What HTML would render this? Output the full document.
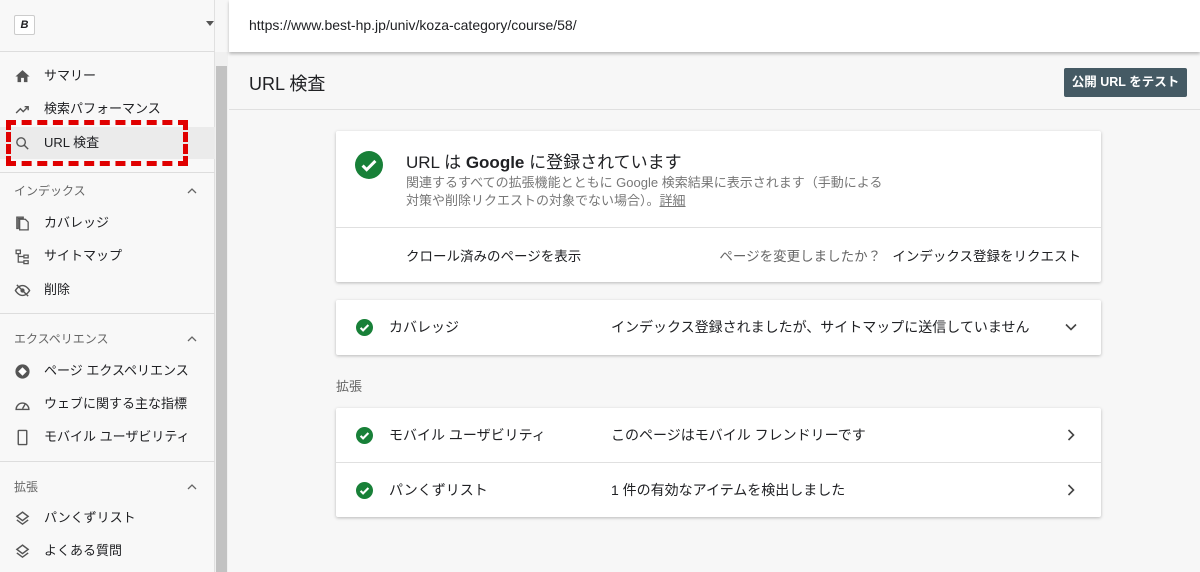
<!DOCTYPE html>
<html><head><meta charset="utf-8"><style>
*{box-sizing:border-box;margin:0;padding:0}
body{width:1200px;height:572px;overflow:hidden;font-family:"Liberation Sans","Noto Sans CJK JP",sans-serif;background:#f7f7f7;color:#202124;position:relative}
.sb{position:absolute;left:0;top:0;width:215px;height:572px;background:#f8f8f8;border-right:1px solid #e0e0e0}
.scroll{position:absolute;left:215px;top:52px;width:13px;height:520px;background:#f0f0f0}
.scroll div{position:absolute;left:1px;top:14px;width:11px;height:506px;background:#c2c2c2}
.top{position:absolute;left:229px;top:0;right:0;height:52px;background:#fff;box-shadow:0 2px 3px rgba(0,0,0,.25);font-size:14px;line-height:50px;padding-left:20px}
.sbh{position:absolute;left:0;top:0;width:215px;height:52px;border-bottom:1px solid #ddd}
.logo{position:absolute;left:14px;top:15px;width:21px;height:20px;border:1px solid #ccc;border-radius:2px;background:#fff;font:italic bold 11px "Liberation Sans";text-align:center;line-height:18px}
.it{position:absolute;left:0;width:215px;font-size:13px;height:32px;line-height:32px;padding-left:44px;color:#202124}
.ic{position:absolute;left:14px;top:8px;width:17px;height:17px}
.sec{position:absolute;left:14px;font-size:12px;color:#666}
.car{position:absolute;left:187px;width:10px;height:10px}
.dv{position:absolute;left:0;width:215px;border-top:1px solid #ddd}
.hdr{position:absolute;left:229px;top:52px;right:0;height:58px;border-bottom:1px solid #e0e0e0}
.hdr h1{position:absolute;left:20px;top:18px;font-size:18px;font-weight:normal}
.btn{position:absolute;left:1064px;top:68px;width:123px;height:29px;background:#455a64;color:#fff;font-size:12.5px;font-weight:bold;text-align:center;line-height:29px;border-radius:2px;white-space:nowrap}
.card{position:absolute;left:336px;width:765px;background:#fff;box-shadow:0 1px 3px rgba(0,0,0,.25);border-radius:2px}
.chk{position:absolute;width:17px;height:17px;border-radius:50%;background:#188038}
.row{position:absolute;left:0;width:765px;height:54px;font-size:14px;line-height:54px}
</style></head><body>
<div class="sb">
<div class="sbh"><div class="logo">B</div><div style="position:absolute;left:206px;top:21px;border:4px solid transparent;border-top:5px solid #555"></div></div>
<div class="it" style="top:60px"><svg class="ic" viewBox="0 0 24 24"><path d="M10 20v-6h4v6h5v-8h3L12 3 2 12h3v8z" fill="#555"/></svg>サマリー</div>
<div class="it" style="top:93px"><svg class="ic" viewBox="0 0 24 24"><path d="M3 17l6-6 4 4 7-7M15 8h5v5" stroke="#555" stroke-width="2" fill="none"/></svg>検索パフォーマンス</div>
<div class="it" style="top:127px;background:#ebebeb"><svg class="ic" viewBox="0 0 24 24"><circle cx="10" cy="10" r="6" stroke="#555" stroke-width="2" fill="none"/><path d="M14.5 14.5L20 20" stroke="#555" stroke-width="2"/></svg>URL 検査</div>
<div class="dv" style="top:172px"></div>
<div class="sec" style="top:182px">インデックス</div><svg class="car" style="top:186px" viewBox="0 0 10 10"><path d="M1 7l4-4 4 4" stroke="#666" stroke-width="1.3" fill="none"/></svg>
<div class="it" style="top:207px"><svg class="ic" viewBox="0 0 24 24"><path d="M8 6h8l4 4v11H8z M4 3h9v2H6v14H4z" stroke="#555" stroke-width="1.8" fill="none"/></svg>カバレッジ</div>
<div class="it" style="top:240px"><svg class="ic" viewBox="0 0 24 24"><path d="M3 3h6v5H3zM14 10h6v4h-6zM14 18h6v4h-6zM6 8v12h8M6 12h8" stroke="#555" stroke-width="1.8" fill="none"/></svg>サイトマップ</div>
<div class="it" style="top:274px"><svg class="ic" viewBox="0 0 24 24"><path d="M2 12s4-7 10-7 10 7 10 7-4 7-10 7S2 12 2 12z" stroke="#555" stroke-width="2" fill="none"/><circle cx="12" cy="12" r="3" fill="#555"/><path d="M4 4l16 16" stroke="#555" stroke-width="2"/></svg>削除</div>
<div class="dv" style="top:313px"></div>
<div class="sec" style="top:330px">エクスペリエンス</div><svg class="car" style="top:334px" viewBox="0 0 10 10"><path d="M1 7l4-4 4 4" stroke="#666" stroke-width="1.3" fill="none"/></svg>
<div class="it" style="top:355px"><svg class="ic" viewBox="0 0 24 24"><circle cx="12" cy="12" r="10" fill="#555"/><path d="M12 6l6 6-6 6-6-6z" fill="#fff"/></svg>ページ エクスペリエンス</div>
<div class="it" style="top:388px"><svg class="ic" viewBox="0 0 24 24"><path d="M3 19a9 9 0 1 1 18 0z" stroke="#555" stroke-width="2" fill="none"/><path d="M12 18l4-7" stroke="#555" stroke-width="2"/></svg>ウェブに関する主な指標</div>
<div class="it" style="top:421px"><svg class="ic" viewBox="0 0 24 24"><rect x="6" y="2" width="12" height="20" rx="1" stroke="#555" stroke-width="2" fill="none"/></svg>モバイル ユーザビリティ</div>
<div class="dv" style="top:461px"></div>
<div class="sec" style="top:478px">拡張</div><svg class="car" style="top:482px" viewBox="0 0 10 10"><path d="M1 7l4-4 4 4" stroke="#666" stroke-width="1.3" fill="none"/></svg>
<div class="it" style="top:502px"><svg class="ic" viewBox="0 0 24 24"><path d="M12 3l8 6-8 6-8-6zM4 14l8 6 8-6" stroke="#555" stroke-width="2" fill="none"/></svg>パンくずリスト</div>
<div class="it" style="top:535px"><svg class="ic" viewBox="0 0 24 24"><path d="M12 3l8 6-8 6-8-6zM4 14l8 6 8-6" stroke="#555" stroke-width="2" fill="none"/></svg>よくある質問</div>
</div>
<div style="position:absolute;left:6px;top:120px;width:182px;height:46px;border:5px dashed #e00000"></div>
<div class="scroll"><div></div></div>
<div class="top">https://www.best-hp.jp/univ/koza-category/course/58/</div>
<div class="hdr"><h1>URL 検査</h1></div>
<div class="btn">公開 URL をテスト</div>

<div class="card" style="top:131px;height:151px">
<div class="chk" style="left:19px;top:20px;width:28px;height:28px"><svg viewBox="0 0 24 24" width="28" height="28"><path d="M6.5 12.5l3.5 3.5 7.5-7.5" stroke="#fff" stroke-width="2.6" fill="none"/></svg></div>
<div style="position:absolute;left:70px;top:17px;font-size:17px">URL は <span style="font-weight:600">Google</span> に登録されています</div>
<div style="position:absolute;left:70px;top:43px;width:484px;font-size:13px;color:#777;line-height:18px">関連するすべての拡張機能とともに Google 検索結果に表示されます（手動による対策や削除リクエストの対象でない場合）。<u>詳細</u></div>
<div style="position:absolute;left:0;top:96px;width:765px;border-top:1px solid #e0e0e0"></div>
<div style="position:absolute;left:70px;top:114px;font-size:13.5px">クロール済みのページを表示</div>
<div style="position:absolute;right:20px;top:114px;font-size:13.5px"><span style="color:#666">ページを変更しましたか？</span>&nbsp;&nbsp; インデックス登録をリクエスト</div>
</div>

<div class="card" style="top:300px;height:55px">
<div class="row"><div class="chk" style="left:20px;top:19px"><svg viewBox="0 0 24 24" width="17" height="17" style="display:block"><path d="M6.5 12.5l3.5 3.5 7.5-7.5" stroke="#fff" stroke-width="3" fill="none"/></svg></div>
<span style="position:absolute;left:53px">カバレッジ</span><span style="position:absolute;left:275px">インデックス登録されましたが、サイトマップに送信していません</span><svg style="position:absolute;left:729px;top:23px" width="12" height="8" viewBox="0 0 12 8"><path d="M1 1.5l5 5 5-5" stroke="#444" stroke-width="1.6" fill="none"/></svg></div>
</div>

<div style="position:absolute;left:336px;top:376px;font-size:13px;color:#666">拡張</div>

<div class="card" style="top:408px;height:109px">
<div class="row" style="top:0"><div class="chk" style="left:20px;top:19px"><svg viewBox="0 0 24 24" width="17" height="17" style="display:block"><path d="M6.5 12.5l3.5 3.5 7.5-7.5" stroke="#fff" stroke-width="3" fill="none"/></svg></div>
<span style="position:absolute;left:53px">モバイル ユーザビリティ</span><span style="position:absolute;left:275px">このページはモバイル フレンドリーです</span><svg style="position:absolute;left:731px;top:21px" width="8" height="12" viewBox="0 0 8 12"><path d="M1.5 1l5 5-5 5" stroke="#444" stroke-width="1.6" fill="none"/></svg></div>
<div style="position:absolute;left:0;top:54px;width:765px;border-top:1px solid #e0e0e0"></div>
<div class="row" style="top:55px"><div class="chk" style="left:20px;top:19px"><svg viewBox="0 0 24 24" width="17" height="17" style="display:block"><path d="M6.5 12.5l3.5 3.5 7.5-7.5" stroke="#fff" stroke-width="3" fill="none"/></svg></div>
<span style="position:absolute;left:53px">パンくずリスト</span><span style="position:absolute;left:275px">1 件の有効なアイテムを検出しました</span><svg style="position:absolute;left:731px;top:21px" width="8" height="12" viewBox="0 0 8 12"><path d="M1.5 1l5 5-5 5" stroke="#444" stroke-width="1.6" fill="none"/></svg></div>
</div>
</body></html>
